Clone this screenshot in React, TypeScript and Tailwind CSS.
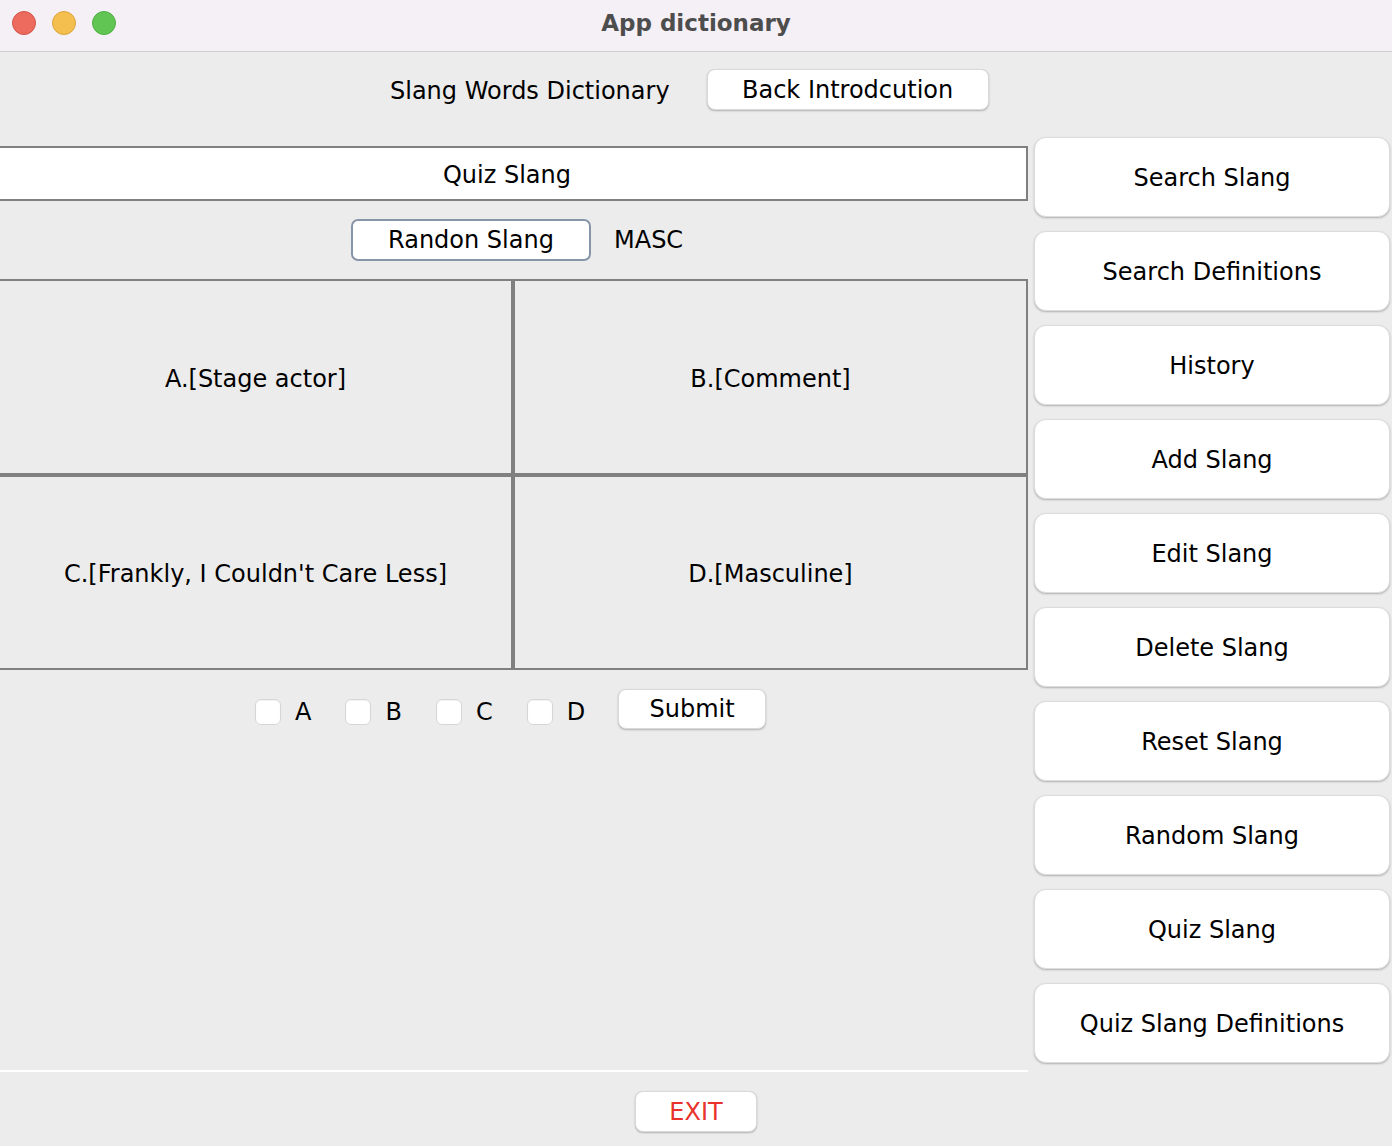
import React from "react";

const sideItems = [
  "Search Slang",
  "Search Definitions",
  "History",
  "Add Slang",
  "Edit Slang",
  "Delete Slang",
  "Reset Slang",
  "Random Slang",
  "Quiz Slang",
  "Quiz Slang Definitions",
];

const answers = [
  "A.[Stage actor]",
  "B.[Comment]",
  "C.[Frankly, I Couldn't Care Less]",
  "D.[Masculine]",
];

function Checkbox({ label }: { label: string }) {
  return (
    <label className="flex items-center gap-[14px]">
      <span className="w-[26px] h-[26px] rounded-[6px] bg-white border border-[#d6d6d6] shadow-[inset_0_1px_1px_rgba(0,0,0,0.05)]" />
      <span className="text-[24px] leading-none text-black">{label}</span>
    </label>
  );
}

export default function App() {
  return (
    <div className="w-[1392px] h-[1146px] bg-[#ececec] overflow-hidden text-black font-['DejaVu_Sans',sans-serif] flex flex-col">
      {/* title bar */}
      <div className="h-[52px] shrink-0 bg-[#f5f0f6] border-b border-[#d2ced3] grid grid-cols-[1fr_auto_1fr] items-center">
        <div className="flex items-center gap-[16px] pl-[12px] pb-[5px]">
          <span className="w-[24px] h-[24px] rounded-full bg-[#ec6a5e] border border-[#d35449]" />
          <span className="w-[24px] h-[24px] rounded-full bg-[#f5bf4f] border border-[#d9a43c]" />
          <span className="w-[24px] h-[24px] rounded-full bg-[#61c554] border border-[#4fae43]" />
        </div>
        <div className="pb-[5px] text-[23px] font-bold text-[#4d4d4d]">App dictionary</div>
        <div />
      </div>

      {/* header */}
      <div className="h-[85px] shrink-0 flex items-start pt-[17px] pl-[390px] gap-[37px]">
        <span className="text-[24px] leading-none mt-[10px]">Slang Words Dictionary</span>
        <button className="w-[282px] h-[41px] bg-white rounded-[8px] border border-[#d9d9d9] shadow-[0_1px_2px_rgba(0,0,0,0.25)] text-[24px] leading-none">
          Back Introdcution
        </button>
      </div>

      <div className="flex-1 flex">
        {/* left panel */}
        <div className="w-[1028px] flex flex-col">
          <div className="mt-[9px] -ml-[14px] w-[1042px] h-[55px] bg-white border-2 border-[#808080] flex items-center justify-center text-[24px] pt-[3px]">
            Quiz Slang
          </div>
          <div className="h-[78px] flex items-center pl-[351px] gap-[23px] pb-[1px]">
            <button className="w-[240px] h-[42px] bg-white rounded-[7px] border-2 border-[#8795a8] text-[24px] leading-none">
              Randon Slang
            </button>
            <span className="text-[24px] leading-none">MASC</span>
          </div>
          <div className="-ml-[2px] w-[1030px] grid grid-cols-2 grid-rows-[196px_195px]">
            {answers.map((a) => (
              <div key={a} className="border-2 border-[#808080] flex items-center justify-center text-[24px] pt-[3px]">
                {a}
              </div>
            ))}
          </div>
          <div className="flex items-center pl-[255px] pt-[19px] h-[60px]">
            <div className="flex items-center gap-[34px] mt-[4px]">
              <Checkbox label="A" />
              <Checkbox label="B" />
              <Checkbox label="C" />
              <Checkbox label="D" />
            </div>
            <button className="ml-[33px] w-[148px] h-[40px] bg-white rounded-[8px] border border-[#d9d9d9] shadow-[0_1px_2px_rgba(0,0,0,0.25)] text-[24px] leading-none -mt-[2px]">
              Submit
            </button>
          </div>
          <div className="flex-1" />
          <div className="h-[2px] bg-white" />
        </div>

        {/* right column */}
        <div className="ml-[6px] w-[356px] flex flex-col gap-[14px]">
          {sideItems.map((s) => (
            <button
              key={s}
              className="h-[80px] bg-white rounded-[12px] border border-[#dcdcdc] shadow-[0_1px_2px_rgba(0,0,0,0.25)] text-[24px] leading-none pt-[2px]"
            >
              {s}
            </button>
          ))}
        </div>
      </div>

      {/* bottom */}
      <div className="h-[74px] shrink-0 flex justify-center pt-[19px]">
        <button className="w-[122px] h-[41px] bg-white rounded-[8px] border border-[#d9d9d9] shadow-[0_1px_2px_rgba(0,0,0,0.25)] text-[24px] leading-none text-[#e8322b]">
          EXIT
        </button>
      </div>
    </div>
  );
}
